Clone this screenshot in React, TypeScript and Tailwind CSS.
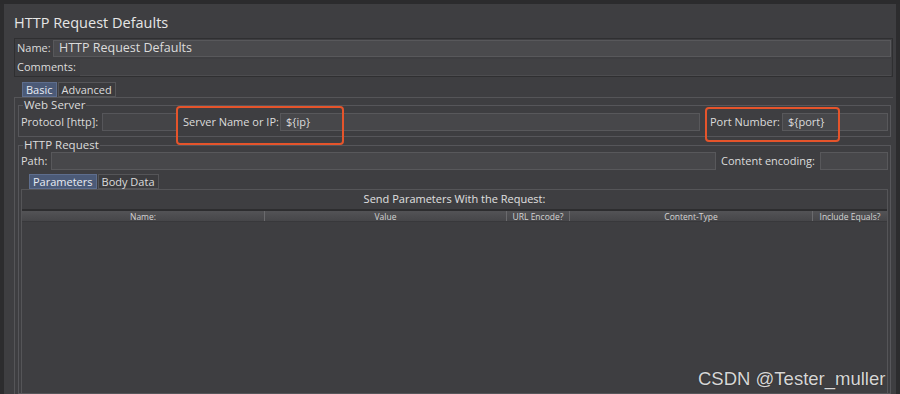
import React from "react";

const font = { fontFamily: '"Open Sans", "DejaVu Sans", sans-serif' };

export default function App() {
  return (
    <div
      className="w-[900px] h-[394px] overflow-hidden bg-[#3e3e41] text-[#dcdcdc] flex flex-col border-t-[4px] border-[#2b2b2d] relative"
      style={font}
    >
      <div className="flex flex-1 min-h-0">
        <div className="w-[4px] bg-[#2c2c2e]" />
        <div className="flex-1 min-w-0 flex flex-col pl-[10px] pr-[3px]">
          <div className="h-[34px] flex items-center pt-[4px] text-[14.5px] text-[#e6e6e6] whitespace-nowrap">
            HTTP Request Defaults
          </div>
          {/* name / comments */}
          <div className="border border-[#2f2f31] flex flex-col">
            <div className="flex items-center h-[19px] px-[1px]">
              <span className="text-[11px] w-[37px] pl-[1px] whitespace-nowrap shrink-0">Name:</span>
              <div className="flex-1 h-[17px] bg-[#4a4a4d] border border-[#58585b] text-[12.5px] flex items-center pl-[5px] whitespace-nowrap">
                HTTP Request Defaults
              </div>
            </div>
            <div className="flex items-center h-[18px] px-[1px]">
              <span className="text-[11px] pl-[1px] whitespace-nowrap shrink-0">Comments:</span>
              <div className="flex-1 h-[17px] bg-[#414144] ml-[4px] border-b border-[#4c4c4f]" />
            </div>
          </div>
          {/* tabs */}
          <div className="flex items-end h-[20px] pl-[8px]">
            <div className="h-[15px] px-[3px] bg-[#4b5a77] border border-[#5e6e8e] text-[11px] leading-[13px] text-[#e8ecf4] whitespace-nowrap">Basic</div>
            <div className="h-[15px] px-[3px] ml-[1px] bg-[#3b3b3e] border border-[#555558] text-[11px] leading-[13px] whitespace-nowrap">Advanced</div>
          </div>
          <div className="flex-1 min-h-0 border-l border-t border-[#555558] pl-[2px] pr-[1px] flex flex-col">
            <fieldset className="border border-[#56565a] mx-[1px] mt-[1px] px-[2px] pt-[1px] pb-[4px]">
              <legend className="text-[11.5px] px-[1px] ml-[2px] leading-[12px] whitespace-nowrap">Web Server</legend>
              <div className="flex items-center h-[20px]">
                <span className="text-[11px] w-[81px] shrink-0 whitespace-nowrap">Protocol [http]:</span>
                <div className="w-[76px] h-[18px] bg-[#444447] border border-[#56565a] shrink-0" />
                <span className="text-[11px] ml-[5px] w-[97px] shrink-0 whitespace-nowrap">Server Name or IP:</span>
                <div className="flex-1 h-[18px] bg-[#47474a] border border-[#58585b] text-[11px] flex items-center pl-[5px] whitespace-nowrap">
                  {"${ip}"}
                </div>
                <span className="text-[11px] ml-[10px] w-[72px] shrink-0 whitespace-nowrap">Port Number:</span>
                <div className="w-[106px] h-[18px] bg-[#47474a] border border-[#58585b] text-[11px] flex items-center pl-[5px] shrink-0 whitespace-nowrap">
                  {"${port}"}
                </div>
              </div>
            </fieldset>
            <fieldset className="border border-[#56565a] mx-[1px] px-[2px] mt-[2px] flex-1 min-h-0 flex flex-col">
              <legend className="text-[11.5px] px-[1px] ml-[2px] leading-[12px] whitespace-nowrap">HTTP Request</legend>
              <div className="flex items-center h-[20px]">
                <span className="text-[11px] w-[30px] shrink-0 whitespace-nowrap">Path:</span>
                <div className="flex-1 h-[18px] bg-[#47474a] border border-[#58585b]" />
                <span className="text-[11px] ml-[5px] w-[99px] shrink-0 whitespace-nowrap">Content encoding:</span>
                <div className="w-[68px] h-[18px] bg-[#47474a] border border-[#58585b] shrink-0" />
              </div>
              <div className="flex items-end h-[18px] pl-[8px]">
                <div className="h-[15px] px-[3px] bg-[#4b5a77] border border-[#5e6e8e] text-[11px] leading-[13px] text-[#e8ecf4] whitespace-nowrap">Parameters</div>
                <div className="h-[15px] px-[3px] ml-[1px] bg-[#3b3b3e] border border-[#555558] text-[11px] leading-[13px] whitespace-nowrap">Body Data</div>
              </div>
              <div className="flex-1 min-h-0 border-t border-l border-r border-[#555558] flex flex-col">
                <div className="h-[19px] flex items-center justify-center text-[11px] text-[#e0e0e0] whitespace-nowrap">
                  Send Parameters With the Request:
                </div>
                <div className="flex-1 min-h-0 border-t-[2px] border-[#2d2d2f] bg-[#3e3e41] flex flex-col">
                  <div className="flex h-[11px] bg-gradient-to-b from-[#535356] to-[#464649] border-b border-[#38383b] text-[8.5px] leading-[11px] text-[#d4d4d4] whitespace-nowrap">
                    <div className="w-[243px] text-center border-r border-[#6a6a6d]">Name:</div>
                    <div className="w-[242px] text-center border-r border-[#6a6a6d]">Value</div>
                    <div className="w-[63px] text-center border-r border-[#6a6a6d]">URL Encode?</div>
                    <div className="w-[243px] text-center border-r border-[#6a6a6d]">Content-Type</div>
                    <div className="flex-1 text-center">Include Equals?</div>
                  </div>
                </div>
              </div>
            </fieldset>
          </div>
        </div>
        <div className="w-[4px] bg-[#2c2c2e]" />
      </div>
      {/* annotation boxes */}
      <div className="absolute left-[176px] top-[102px] w-[168px] h-[39px] border-2 border-[#e5542b] rounded-[4px]" />
      <div className="absolute left-[705px] top-[103px] w-[135px] h-[35px] border-2 border-[#e5542b] rounded-[4px]" />
      <div
        className="absolute left-[698px] top-[361px] text-[18.5px] text-[#d6d6d6]"
        style={{ fontFamily: '"Liberation Sans", Arial, sans-serif', textShadow: "0 0 1px #222" }}
      >
        CSDN @Tester_muller
      </div>
    </div>
  );
}
